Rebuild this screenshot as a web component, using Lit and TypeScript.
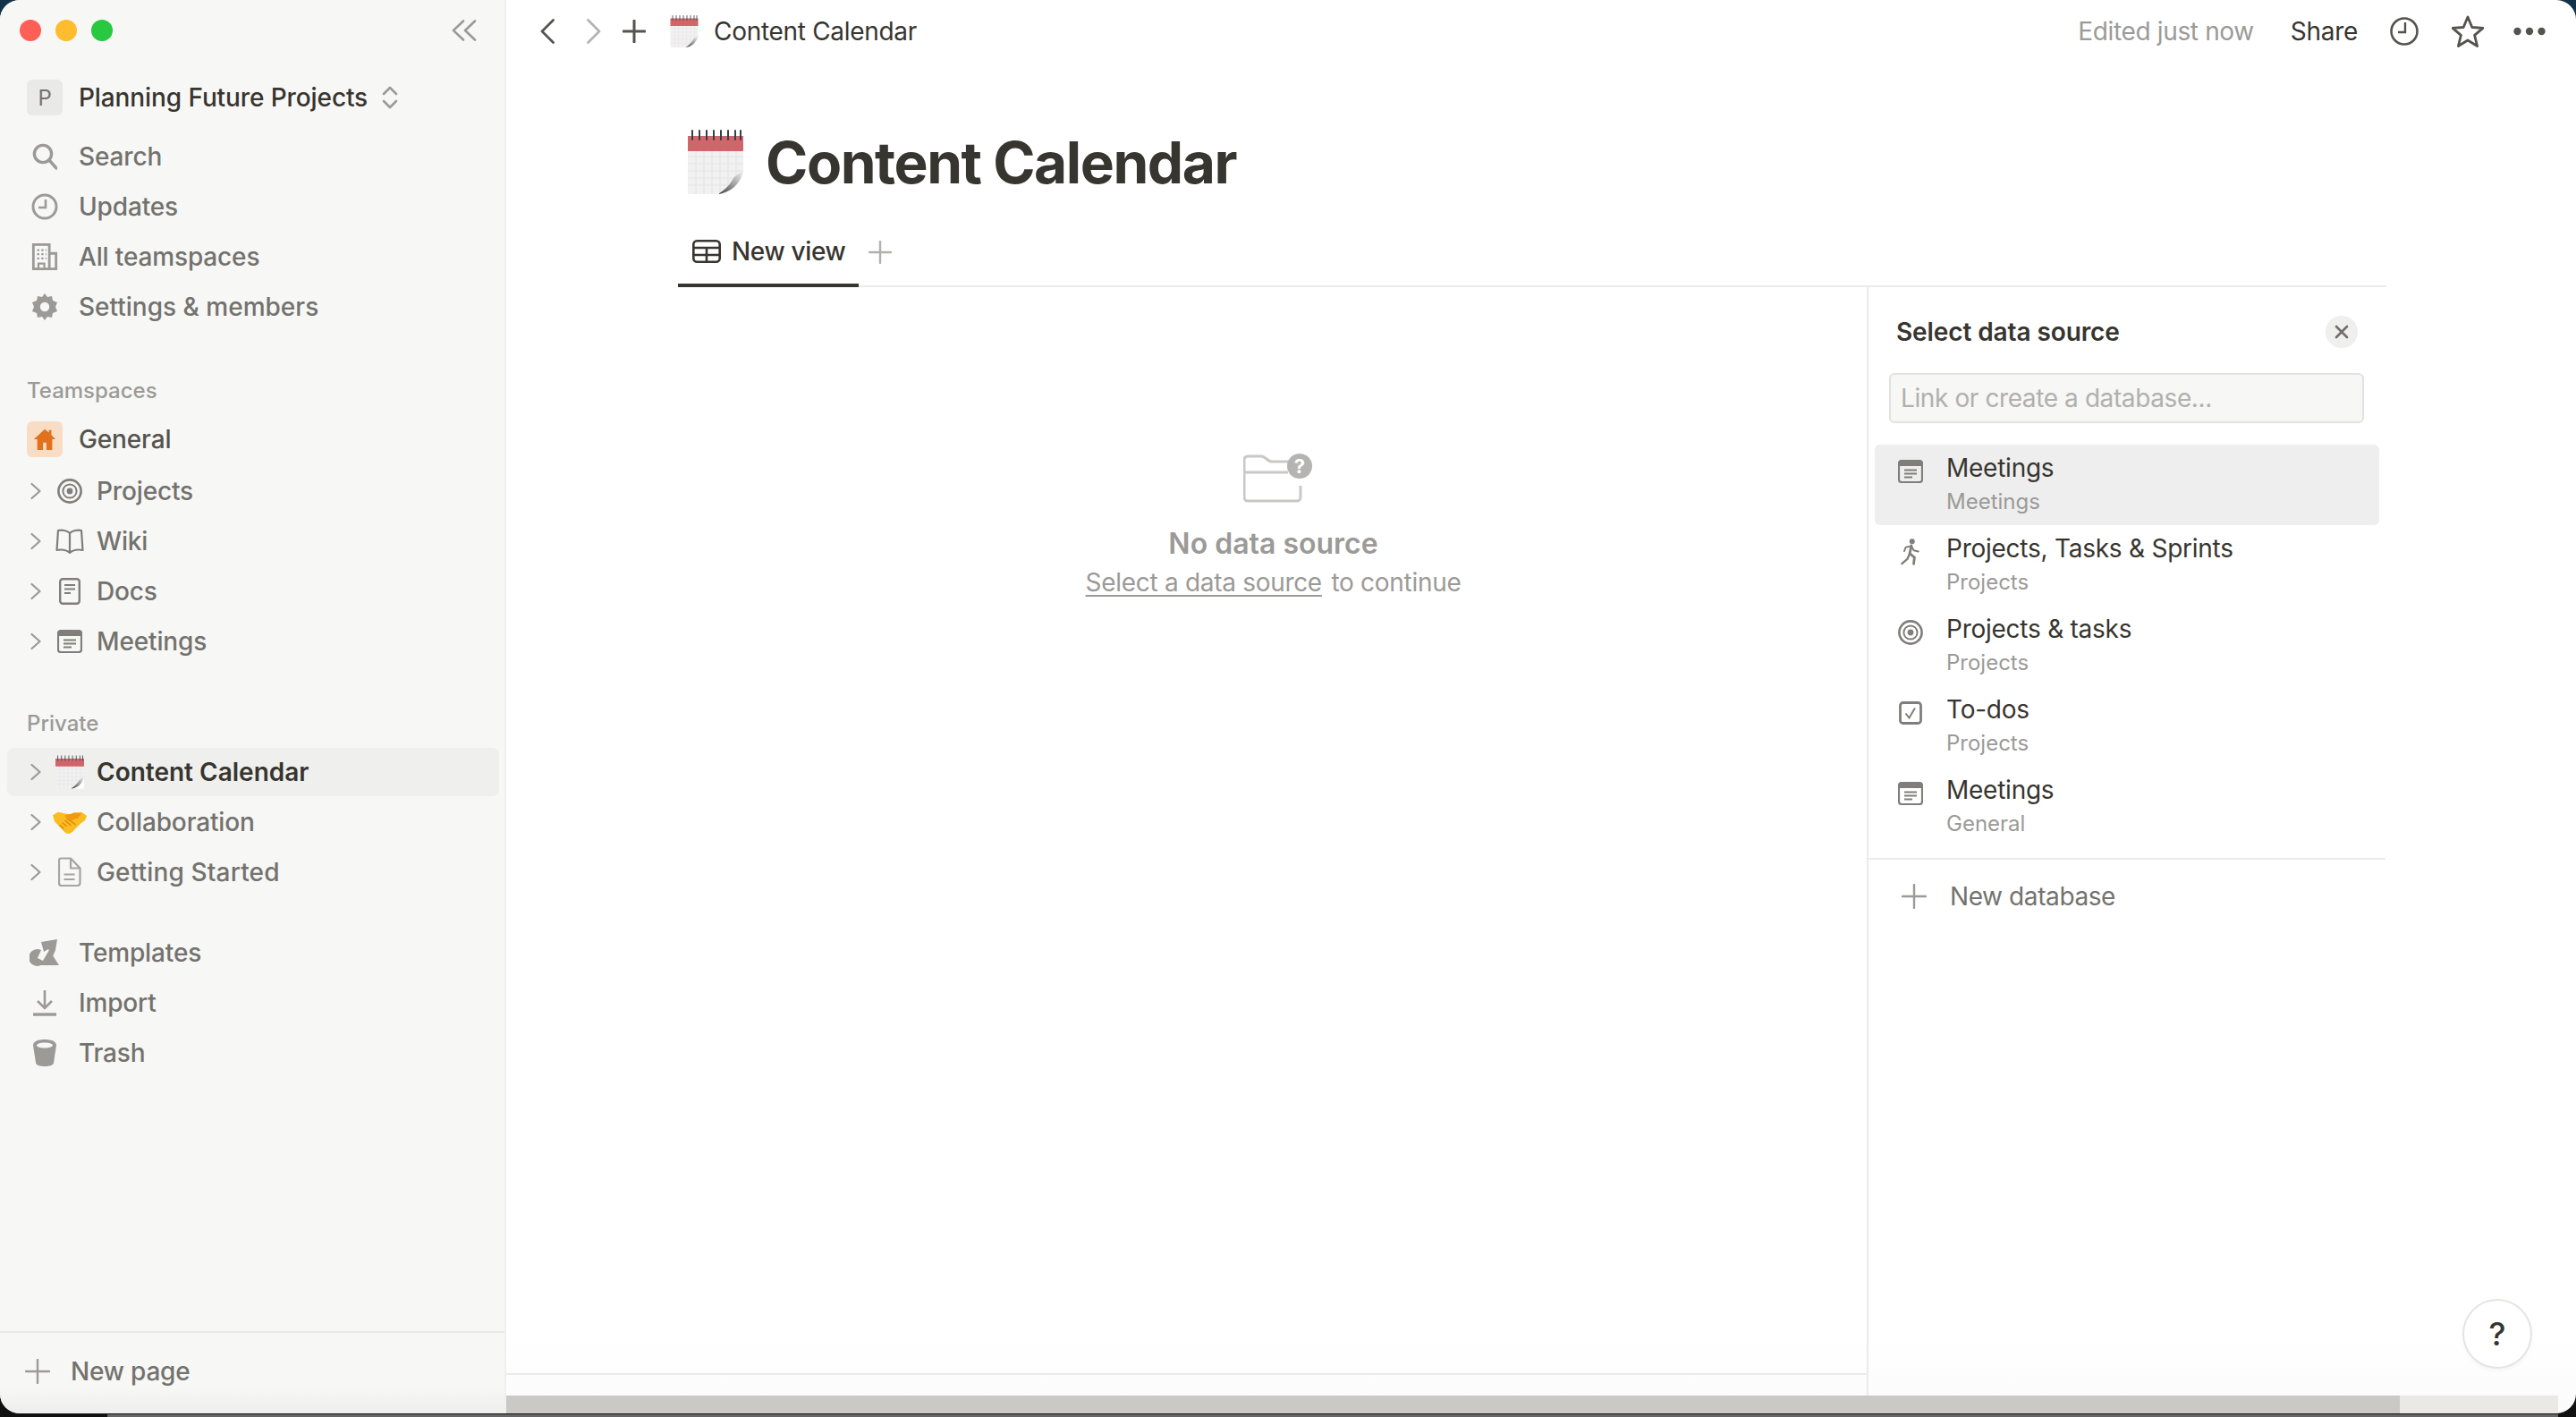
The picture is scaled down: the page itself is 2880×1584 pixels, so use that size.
import { LitElement, html, css } from "lit";
import { customElement } from "lit/decorators.js";

const chevron = html`<svg class="chev" viewBox="0 0 12 20"><path d="M1.5 2l9 8-9 8" fill="none" stroke="#9b9a97" stroke-width="2.2" stroke-linecap="round" stroke-linejoin="round"/></svg>`;

const target = (s = 28, c = "#7f7e7a", cls = "") => html`<svg class=${cls} width=${s} height=${s} viewBox="0 0 28 28" fill="none" stroke=${c}><circle cx="14" cy="14" r="12.6" stroke-width="2.6"/><circle cx="14" cy="14" r="7.6" stroke-width="2"/><circle cx="14" cy="14" r="3.4" fill=${c} stroke="none"/></svg>`;

const meetings = () => html`<svg width="28" height="26" viewBox="0 0 28 26"><rect x="1" y="1" width="26" height="24" rx="3" fill="none" stroke="#7f7e7a" stroke-width="2.2"/><path d="M1 4a3 3 0 0 1 3-3h20a3 3 0 0 1 3 3v3H1z" fill="#7f7e7a"/><path d="M7 11.500h14M7 15.500h14M7 19.500h9" stroke="#7f7e7a" stroke-width="2" fill="none"/></svg>`;

const calendar = (w: number, h: number, jul = false) => html`<svg width=${w} height=${h} viewBox="0 0 62 72">
  <defs><linearGradient id="curl" x1="0" y1="1" x2="1" y2="0"><stop offset="0" stop-color="#3c3c3c"/><stop offset=".55" stop-color="#a8a8a8"/><stop offset="1" stop-color="#f2f2f2"/></linearGradient></defs>
  <rect x="0" y="8" width="62" height="64" fill="#f2f1f1"/>
  <path d="M0 30h62M0 38h62M0 46h62M0 54h62M0 62h62M9 24v48M18 24v48M27 24v48M36 24v48M45 24v48M54 24v48" stroke="#e4e3e3" stroke-width="1" fill="none"/>
  <rect x="0" y="7" width="62" height="17" fill="#d0656a"/>
  ${jul ? html`<text x="4" y="21" font-size="9" font-family="Inter" fill="#f7dcdc">JUL</text>` : ""}
  <path d="M5 1v10M13 1v10M21 1v10M29 1v10M37 1v10M45 1v10M53 1v10M59 1v10" stroke="#33404a" stroke-width=${jul ? 2 : 1.6} stroke-linecap="round"/>
  <path d="M62 46C60 60 50 68 34 72H62Z" fill="#fff"/>
  <path d="M62 46C57 50 52 51 50 56C46 63 40 68 34 72C48 70 58 62 62 46Z" fill="url(#curl)"/>
</svg>`;

const handshake = html`<svg width="38" height="26" viewBox="0 0 38 30" preserveAspectRatio="none">
  <path d="M0 6l6-4 8 2 5 1 5-2 8-1 6 5-2 6-4 3-8 9c-2 3-5 5-7 5-3-1-5-3-7-6L2 14Z" fill="#fbbc22"/>
  <path d="M14 6l5-1 5-2 8 1-4 6c-3 0-5 3-8 3-3 1-5-1-6-7Z" fill="#f09a12"/>
  <path d="M11 16l4 4M14 13l6 6M8 19l4 4M18 12l7 6" stroke="#dc8a0e" stroke-width="1.5" fill="none" stroke-linecap="round"/>
</svg>`;

@customElement("app-root")
export class AppRoot extends LitElement {
  static styles = css`
    :host { display: block; position: relative; width: 2880px; height: 1584px; overflow: hidden; background: linear-gradient(#12324a 0 40px, #111 60px); font-family: Inter, "Liberation Sans", sans-serif; color: #37352f; }
    .win { width: 2880px; height: 1580px; border-radius: 22px; overflow: hidden; display: flex; background: linear-gradient(#fff calc(100% - 90px), #fbfbfb); position: relative; }
    .side { width: 566px; flex: none; background: linear-gradient(#f7f7f5 calc(100% - 30px), #eeeeec); border-right: 2px solid #f0f0ee; box-sizing: border-box; display: flex; flex-direction: column; padding: 0 6px 0 8px; position: relative; }
    .lights { height: 68px; display: flex; align-items: center; padding: 0 25px 0 14px; gap: 16px; flex: none; }
    .dot { width: 24px; height: 24px; border-radius: 50%; }
    .collapse { margin-left: auto; }
    .row { height: 56px; flex: none; display: flex; align-items: center; font-size: 28px; font-weight: 500; color: #73726e; border-radius: 8px; white-space: nowrap; letter-spacing: -0.15px; }
    .row.wide { letter-spacing: 0; }
    .row.wider { letter-spacing: 0.15px; }
    .nav .ic { width: 40px; margin-left: 22px; margin-right: 18px; display: flex; justify-content: center; align-items: center; flex: none; }
    .tree .chev { width: 12px; height: 20px; margin-left: 26px; flex: none; }
    .tree .ic { width: 40px; margin-left: 12px; margin-right: 10px; display: flex; justify-content: center; align-items: center; flex: none; }
    .ws { margin-top: 13px; color: #37352f; margin-bottom: 10px; letter-spacing: -0.1px; }
    .ava { width: 40px; height: 40px; background: #e9e9e7; border-radius: 6px; color: #73726e; font-size: 24px; font-weight: 400; display: flex; align-items: center; justify-content: center; margin-left: 22px; margin-right: 18px; }
    .updown { margin-left: 16px; }
    .label { height: 40px; flex: none; display: flex; align-items: center; padding-left: 22px; font-size: 24px; font-weight: 500; color: #9b9a97; }
    .t1 { margin-top: 45px; }
    .general { margin-top: 7px; color: #55534e; margin-bottom: 2px; }
    .home { width: 40px; height: 40px; background: #f9dcc4; border-radius: 6px; display: flex; align-items: center; justify-content: center; }
    .t2 { margin-top: 43px; }
    .sel { background: #efefed; height: 54px; margin-top: 8px; margin-bottom: 1px; color: #37352f; font-weight: 600; }
    .m1 { margin-top: 34px; }
    .foot { margin-top: auto; margin-left: -8px; margin-right: -6px; border-top: 2px solid #e9e9e7; height: 92px; flex: none; box-sizing: border-box; display: flex; align-items: center; padding: 0 0 0 28px; gap: 23px; font-size: 28px; font-weight: 500; color: #73726e; letter-spacing: -0.2px; }
    .foot span, .foot svg { position: relative; top: -2px; }
    .main { flex: 1; display: flex; flex-direction: column; min-width: 0; position: relative; }
    .top { height: 70px; flex: none; display: flex; align-items: center; padding-left: 38px; }
    .top .crumb { font-size: 28px; font-weight: 400; color: #37352f; margin-left: 17px; letter-spacing: -0.3px; }
    .top svg { flex: none; }
    .edited { margin-left: auto; font-size: 28px; color: #9b9a97; letter-spacing: -0.35px; }
    .share { font-size: 28px; color: #37352f; margin-left: 41px; margin-right: 36px; letter-spacing: -0.3px; }
    .head { display: flex; align-items: center; margin-left: 203px; margin-top: 75px; height: 72px; flex: none; gap: 25px; }
    .h1 { font-size: 64px; font-weight: 700; color: #37352f; letter-spacing: -1.45px; line-height: 72px; position: relative; top: 1px; }
    .tabs { margin-left: 192px; width: 1910px; margin-top: 32px; height: 72px; flex: none; display: flex; align-items: stretch; border-bottom: 2px solid #ebebea; box-sizing: border-box; }
    .tab { width: 202px; height: 72px; box-sizing: border-box; border-bottom: 4px solid #37352f; display: flex; align-items: center; padding: 0 0 4px 16px; gap: 12px; font-size: 28px; font-weight: 500; color: #37352f; white-space: nowrap; letter-spacing: -0.35px; margin-bottom: -2px; }
    .tabplus { margin-left: 11px; align-self: center; margin-top: -4px; }
    .body { flex: 1; display: flex; min-height: 0; }
    .left { width: 1521px; flex: none; box-sizing: border-box; display: flex; flex-direction: column; }
    .empty { flex: 1; display: flex; flex-direction: column; align-items: center; padding: 186px 0 0 194px; box-sizing: border-box; }
    .folder { margin-left: 11px; }
    .nd { font-size: 32px; font-weight: 600; color: #9b9a97; margin-top: 25px; line-height: 40px; }
    .nd2 { font-size: 28px; color: #9b9a97; margin-top: 3px; line-height: 40px; white-space: nowrap; letter-spacing: -0.3px; }
    .nd2 u { text-underline-offset: 4px; text-decoration-thickness: 2px; margin-right: 3px; }
    .leftline { height: 23px; border-top: 2px solid #ebebea; flex: none; }
    .panel { width: 580px; flex: none; border-left: 2px solid #ebebea; box-sizing: border-box; display: flex; flex-direction: column; }
    .ph { height: 40px; margin-top: 30px; display: flex; align-items: center; padding: 0 31px 0 31px; font-size: 28px; font-weight: 600; color: #37352f; letter-spacing: -0.1px; }
    .x { width: 36px; height: 36px; margin-left: auto; border-radius: 50%; background: #efefed; display: flex; align-items: center; justify-content: center; }
    .inp { margin: 26px 24px 0 23px; height: 56px; box-sizing: border-box; border: 2px solid #e3e2e0; border-radius: 6px; background: #f7f7f5; font-size: 28px; color: #b1b0ad; display: flex; align-items: center; padding-left: 11px; letter-spacing: -0.4px; }
    .items { margin: 24px 7px 0 7px; }
    .item { height: 90px; border-radius: 6px; display: flex; box-sizing: border-box; padding-left: 20px; }
    .item.on { background: #eeeeee; }
    .item .ic { width: 40px; display: flex; justify-content: center; padding-top: 17px; box-sizing: border-box; margin-right: 20px; flex: none; height: 60px; align-items: flex-start; }
    .item .up1 { margin-top: -1px; }
    .item .up2 { margin-top: -2px; }
    .tt { font-size: 28px; color: #37352f; line-height: 40px; padding-top: 6px; letter-spacing: -0.25px; white-space: nowrap; }
    .st { font-size: 24px; color: #9b9a97; line-height: 36px; white-space: nowrap; }
    .newdb { border-top: 2px solid #ebebea; margin-top: 12px; height: 82px; display: flex; align-items: center; padding-left: 37px; gap: 26px; font-size: 28px; font-weight: 400; color: #73726e; flex: none; letter-spacing: -0.4px; }
    .sb { height: 20px; flex: none; margin-right: 20px; background: #eae9e6; }
    .sb div { width: 2117px; height: 100%; background: #cac9c5; }
    .help { position: absolute; left: 2189px; top: 1454px; width: 74px; height: 74px; border-radius: 50%; background: #fff; box-shadow: 0 0 0 2px #e4e4e2, 0 3px 6px rgba(0,0,0,.06); display: flex; align-items: center; justify-content: center; font-size: 36px; font-weight: 500; color: #37352f; }
    .bottomband { position: absolute; left: 120px; right: 20px; top: 1581px; height: 3px; background: #666; }
  `;

  render() {
    const g = "#9b9a97";
    return html`
      <div class="win">
        <aside class="side">
          <div class="lights">
            <div class="dot" style="background:#ff5f57"></div>
            <div class="dot" style="background:#febc2e"></div>
            <div class="dot" style="background:#28c840"></div>
            <svg class="collapse" width="28" height="24" viewBox="0 0 28 24" fill="none" stroke=${g} stroke-width="2.6" stroke-linecap="round" stroke-linejoin="round"><path d="M13 1.5L2 12l11 10.5M26 1.5L15 12l11 10.5"/></svg>
          </div>
          <div class="row nav ws">
            <div class="ava">P</div>
            <span>Planning Future Projects</span>
            <svg class="updown" width="18" height="26" viewBox="0 0 18 26" fill="none" stroke=${g} stroke-width="2.6" stroke-linecap="round" stroke-linejoin="round"><path d="M2 9l7-7 7 7M2 17l7 7 7-7"/></svg>
          </div>
          <div class="row nav"><div class="ic"><svg width="28" height="30" viewBox="0 0 28 30" fill="none" stroke=${g} stroke-width="3.4"><circle cx="12" cy="12" r="9.6"/><path d="M19 19l8 9" stroke-linecap="round"/></svg></div><span>Search</span></div>
          <div class="row nav"><div class="ic"><svg width="30" height="30" viewBox="0 0 30 30" fill="none" stroke=${g} stroke-width="3"><circle cx="15" cy="15" r="13"/><path d="M16 7v9H8" stroke-width="2.6"/></svg></div><span>Updates</span></div>
          <div class="row nav"><div class="ic"><svg width="30" height="30" viewBox="0 0 30 32" fill="none" stroke=${g} stroke-width="3"><rect x="1.5" y="1.5" width="19" height="29"/><path d="M21 12h7.500v18.500H21"/><path d="M6 8h2.500M11 8h2.500M16 8h1M6 13h2.500M11 13h2.500M16 13h1M6 18h2.500M11 18h2.500M16 18h1M7.500 30v-6h7v6" stroke-width="2.400"/></svg></div><span>All teamspaces</span></div>
          <div class="row nav wide"><div class="ic"><svg width="30" height="32" viewBox="0 0 30 30"><path d="M15 0l3 4 5-1 1 5 5 2-2 5 2 5-5 2-1 5-5-1-3 4-3-4-5 1-1-5-5-2 2-5-2-5 5-2 1-5 5 1z" fill=${g}/><circle cx="15" cy="15" r="5.2" fill="#f7f7f5"/></svg></div><span>Settings &amp; members</span></div>

          <div class="label t1">Teamspaces</div>
          <div class="row nav general"><div class="ic"><div class="home"><svg width="26" height="26" viewBox="0 0 28 28"><path d="M14 2L1 14h4v13h7v-9h4v9h7V14h4l-5-5V3h-3v3z" fill="#e2711d"/></svg></div></div><span>General</span></div>
          <div class="row tree">${chevron}<div class="ic">${target()}</div><span>Projects</span></div>
          <div class="row tree">${chevron}<div class="ic"><svg width="32" height="28" viewBox="0 0 32 28" fill="none" stroke="#7f7e7a" stroke-width="2.2" stroke-linejoin="round"><path d="M16 5C13 2 7 1 3 2L1.5 24c5-1 10-1 14.500 3 4.500-4 9.500-4 14.500-3L29 2c-4-1-10 0-13 3zM16 5v22"/></svg></div><span>Wiki</span></div>
          <div class="row tree">${chevron}<div class="ic"><svg width="24" height="30" viewBox="0 0 24 30" fill="none" stroke="#7f7e7a" stroke-width="2.4"><rect x="1.2" y="1.2" width="21.600" height="27.600" rx="3"/><path d="M6 8h12M6 12.500h12M6 17h7" stroke-width="2"/></svg></div><span>Docs</span></div>
          <div class="row tree">${chevron}<div class="ic">${meetings()}</div><span>Meetings</span></div>

          <div class="label t2">Private</div>
          <div class="row tree sel wide">${chevron}<div class="ic">${calendar(32, 38)}</div><span>Content Calendar</span></div>
          <div class="row tree">${chevron}<div class="ic">${handshake}</div><span>Collaboration</span></div>
          <div class="row tree wider">${chevron}<div class="ic"><svg width="26" height="34" viewBox="0 0 26 34" fill="none" stroke="#a5a4a1" stroke-width="2.200" stroke-linejoin="round"><path d="M3 1.500h11l10.500 11V29a3 3 0 0 1-3 3H4a3 3 0 0 1-3-3V3.500a2 2 0 0 1 2-2zM14 1.500V12.500h10.500M6.500 19.500h12M6.500 25h12"/></svg></div><span>Getting Started</span></div>

          <div class="row nav m1"><div class="ic"><svg width="34" height="30" viewBox="0 0 34 30" fill=${g}><path d="M13 12a9.500 9.500 0 1 0 4 13l-8-4z"/><path d="M13 3l18-3-2 12-3 7-5-8-5 3z"/><path d="M22 12l11 17H12z"/></svg></div><span>Templates</span></div>
          <div class="row nav"><div class="ic"><svg width="26" height="30" viewBox="0 0 26 30" fill="none" stroke=${g} stroke-width="2.600"><path d="M13 1v19M5 13l8 8 8-8"/><path d="M0 28h26" stroke-width="3.400"/></svg></div><span>Import</span></div>
          <div class="row nav"><div class="ic"><svg width="26" height="30" viewBox="0 0 26 30" fill=${g}><path d="M13 0C6 0 0 2 0 6.500L3 26c.5 3 5 4 10 4s9.500-1 10-4L26 6.500C26 2 20 0 13 0zm0 3.500c5.500 0 9 1.500 9 3s-3.500 3-9 3-9-1.500-9-3 3.500-3 9-3z"/></svg></div><span>Trash</span></div>

          <div class="foot"><svg width="28" height="28" viewBox="0 0 28 28" stroke=${g} stroke-width="2.400" stroke-linecap="round"><path d="M14 1v26M1 14h26"/></svg><span>New page</span></div>
        </aside>

        <main class="main">
          <div class="top">
            <svg width="16" height="28" viewBox="0 0 16 28" fill="none" stroke="#55534e" stroke-width="2.800" stroke-linecap="round" stroke-linejoin="round"><path d="M14.500 1.500L2 14l12.500 12.500"/></svg>
            <svg style="margin-left:36px" width="16" height="28" viewBox="0 0 16 28" fill="none" stroke="#b5b4b1" stroke-width="2.800" stroke-linecap="round" stroke-linejoin="round"><path d="M1.500 1.500L14 14 1.500 26.500"/></svg>
            <svg style="margin-left:24px" width="26" height="26" viewBox="0 0 26 26" stroke="#55534e" stroke-width="3" stroke-linecap="round"><path d="M13 1v24M1 13h24"/></svg>
            <span style="margin-left:27px;display:flex">${calendar(32, 36)}</span>
            <span class="crumb">Content Calendar</span>
            <span class="edited">Edited just now</span>
            <span class="share">Share</span>
            <svg width="32" height="34" viewBox="0 0 32 34" fill="none" stroke="#55534e" stroke-width="2.600"><circle cx="16" cy="17" r="14.500"/><path d="M17 7v11H9" stroke-width="2.400"/></svg>
            <svg style="margin-left:37px" width="36" height="36" viewBox="0 0 36 36" fill="none" stroke="#55534e" stroke-width="2.800" stroke-linejoin="round"><path d="M18 2l4.800 11.500 12.200.9-9.400 8 3 12.100L18 28l-10.600 6.500 3-12.100-9.400-8 12.200-.9z"/></svg>
            <svg style="margin-left:33px;margin-right:34px" width="36" height="10" viewBox="0 0 36 10" fill="#55534e"><circle cx="4.500" cy="5" r="4.200"/><circle cx="18" cy="5" r="4.200"/><circle cx="31.500" cy="5" r="4.200"/></svg>
          </div>
          <div class="head">${calendar(62, 72, true)}<div class="h1">Content Calendar</div></div>
          <div class="tabs">
            <div class="tab"><svg width="32" height="26" viewBox="0 0 32 26" fill="none" stroke="#37352f" stroke-width="2.600"><rect x="1.300" y="1.300" width="29.400" height="23.400" rx="4"/><path d="M1 9h30M1 17h30M16 9v16"/></svg><span>New view</span></div>
            <svg class="tabplus" width="26" height="26" viewBox="0 0 26 26" stroke="#b1b0ad" stroke-width="2.400" stroke-linecap="round"><path d="M13 1v24M1 13h24"/></svg>
          </div>
          <div class="body">
            <div class="left">
              <div class="empty">
                <svg class="folder" width="78" height="56" viewBox="0 0 78 56" fill="none"><path d="M64 36v13a4 4 0 0 1-4 4H5a4 4 0 0 1-4-4V7a4 4 0 0 1 4-4h15c5 0 7 6 12 6h19M1 21h49" stroke="#c9c8c6" stroke-width="3"/><circle cx="63" cy="14" r="14" fill="#b5b4b2"/><text x="63" y="22" text-anchor="middle" font-size="22" font-weight="700" fill="#fff" font-family="Inter">?</text></svg>
                <div class="nd">No data source</div>
                <div class="nd2"><u>Select a data source</u> to continue</div>
              </div>
              <div class="leftline"></div>
            </div>
            <div class="panel">
              <div class="ph"><span>Select data source</span><div class="x"><svg width="16" height="16" viewBox="0 0 16 16" stroke="#6f6e69" stroke-width="2.600" stroke-linecap="round"><path d="M2 2l12 12M14 2L2 14"/></svg></div></div>
              <div class="inp">Link or create a database...</div>
              <div class="items">
                <div class="item on"><div class="ic">${meetings()}</div><div><div class="tt">Meetings</div><div class="st">Meetings</div></div></div>
                <div class="item"><div class="ic"><svg class="up2" width="24" height="30" viewBox="0 0 26 34" fill="none" stroke="#7f7e7a" stroke-linecap="round" stroke-linejoin="round"><circle cx="15" cy="3.600" r="3.400" fill="#7f7e7a" stroke="none"/><path d="M14 9l-2 10 6 5-1 8" stroke-width="3.200"/><path d="M12 19l-3 7-7 6" stroke-width="2.600"/><path d="M14 9.500L7 11l-2 5M14.500 10l2.500 5 6 1.500" stroke-width="2.200"/></svg></div><div><div class="tt">Projects, Tasks &amp; Sprints</div><div class="st">Projects</div></div></div>
                <div class="item"><div class="ic">${target(28, "#7f7e7a", "up1")}</div><div><div class="tt">Projects &amp; tasks</div><div class="st">Projects</div></div></div>
                <div class="item"><div class="ic"><svg width="26" height="26" viewBox="0 0 26 26" fill="none" stroke="#7f7e7a"><rect x="1.500" y="1.500" width="23" height="23" rx="3" stroke-width="2.800"/><path d="M7.500 13.500l4 5 6.500-11" stroke-width="2"/></svg></div><div><div class="tt">To-dos</div><div class="st">Projects</div></div></div>
                <div class="item"><div class="ic">${meetings()}</div><div><div class="tt">Meetings</div><div class="st">General</div></div></div>
              </div>
              <div class="newdb"><svg width="28" height="28" viewBox="0 0 28 28" stroke=${g} stroke-width="2.400" stroke-linecap="round"><path d="M14 1v26M1 14h26"/></svg><span>New database</span></div>
            </div>
          </div>
          <div class="sb"><div></div></div>
          <div class="help">?</div>
        </main>
      </div>
      <div class="bottomband"></div>
    `;
  }
}
